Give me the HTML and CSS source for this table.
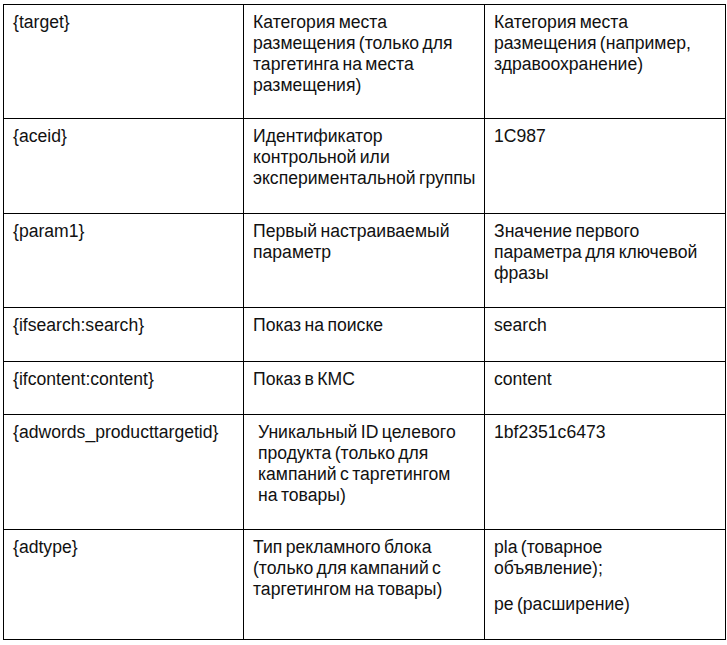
FILE: index.html
```html
<!DOCTYPE html>
<html lang="ru">
<head>
<meta charset="utf-8">
<title>Параметры</title>
<link rel="stylesheet" href="styles.css">
</head>
<body>
<table class="params">
  <colgroup>
    <col class="c1"><col class="c2"><col class="c3">
  </colgroup>
  <tr class="r1">
    <td>{target}</td>
    <td>Категория места<br>размещения (только для<br>таргетинга на места<br>размещения)</td>
    <td>Категория места<br>размещения (например,<br>здравоохранение)</td>
  </tr>
  <tr class="r2">
    <td>{aceid}</td>
    <td>Идентификатор<br>контрольной или<br>экспериментальной группы</td>
    <td>1C987</td>
  </tr>
  <tr class="r3">
    <td>{param1}</td>
    <td>Первый настраиваемый<br>параметр</td>
    <td>Значение первого<br>параметра для ключевой<br>фразы</td>
  </tr>
  <tr class="r4">
    <td>{ifsearch:search}</td>
    <td>Показ на поиске</td>
    <td>search</td>
  </tr>
  <tr class="r5">
    <td>{ifcontent:content}</td>
    <td>Показ в КМС</td>
    <td>content</td>
  </tr>
  <tr class="r6">
    <td>{adwords_producttargetid}</td>
    <td class="indent">Уникальный ID целевого<br>продукта (только для<br>кампаний с таргетингом<br>на товары)</td>
    <td>1bf2351c6473</td>
  </tr>
  <tr class="r7">
    <td>{adtype}</td>
    <td>Тип рекламного блока<br>(только для кампаний с<br>таргетингом на товары)</td>
    <td><p class="para">pla (товарное<br>объявление);</p><p class="para">ре (расширение)</p></td>
  </tr>
</table>
</body>
</html>
```
FILE: styles.css
```css
html, body {
  margin: 0;
  padding: 0;
  background: #fff;
}
body {
  padding: 4px 0 0 3px;
  font-family: "Liberation Sans", Arial, sans-serif;
  font-size: 17.6px;
  line-height: 21px;
  word-spacing: -1.5px;
  color: #111;
}
.params {
  border-collapse: collapse;
  table-layout: fixed;
  width: 722px;
}
.c1 { width: 240px; }
.c2 { width: 241px; }
.c3 { width: 241px; }
.params td {
  border: 1.5px solid #000;
  vertical-align: top;
  padding: 7px 9px 0 9px;
  white-space: nowrap;
}
.params td.indent { padding-left: 14px; }
.r1 { height: 114px; }
.r2 { height: 95px; }
.r3 { height: 94px; }
.r4 { height: 54px; }
.r5 { height: 53px; }
.r6 { height: 115px; }
.r7 { height: 110px; }
.para { margin: 0 0 15px 0; }
```
